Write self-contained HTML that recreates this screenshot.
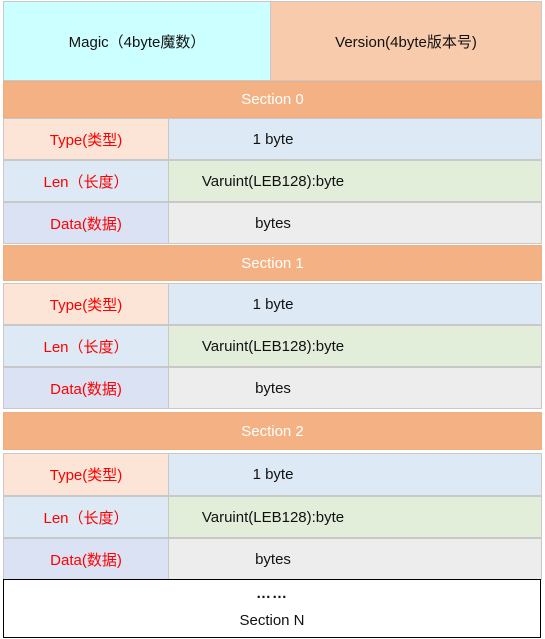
<!DOCTYPE html>
<html><head><meta charset="utf-8"><style>
body{margin:0;width:545px;height:639px;background:#fff;position:relative;overflow:hidden;font-family:"Liberation Sans","Noto Sans CJK SC",sans-serif;font-size:15px;color:#111}
.b{position:absolute;box-sizing:border-box;display:flex;align-items:center;justify-content:center;border:1px solid #c8c8c8}
.t{position:absolute;left:172px;width:200px;text-align:center;height:100%;display:flex;align-items:center;justify-content:center;top:0}
.r{color:#f00}
.s{background:#f4b183;color:#fff;border-color:#f0ad80}
</style></head><body>
<div class="b" style="left:3px;top:1px;width:268px;height:80px;background:#ccffff">Magic（4byte魔数）</div>
<div class="b" style="left:270px;top:1px;width:272px;height:80px;background:#f8cbad">Version(4byte版本号)</div>

<div class="b s" style="left:3px;top:81px;width:539px;height:37px">Section 0</div>
<div class="b r" style="left:3px;top:118px;width:166px;height:42px;background:#fce4d6">Type(类型)</div>
<div class="b" style="left:168px;top:118px;width:374px;height:42px;background:#dde9f5;display:block"><span class="t" style="left:4px">1 byte</span></div>
<div class="b r" style="left:3px;top:160px;width:166px;height:42px;background:#dde9f5">Len（长度）</div>
<div class="b" style="left:168px;top:160px;width:374px;height:42px;background:#e2eeda;display:block"><span class="t" style="left:4px">Varuint(LEB128):byte</span></div>
<div class="b r" style="left:3px;top:202px;width:166px;height:42px;background:#dae2f3">Data(数据)</div>
<div class="b" style="left:168px;top:202px;width:374px;height:42px;background:#ededed;display:block"><span class="t" style="left:4px">bytes</span></div>

<div class="b s" style="left:3px;top:245px;width:539px;height:36px">Section 1</div>
<div class="b r" style="left:3px;top:283px;width:166px;height:42px;background:#fce4d6">Type(类型)</div>
<div class="b" style="left:168px;top:283px;width:374px;height:42px;background:#dde9f5;display:block"><span class="t" style="left:4px">1 byte</span></div>
<div class="b r" style="left:3px;top:325px;width:166px;height:42px;background:#dde9f5">Len（长度）</div>
<div class="b" style="left:168px;top:325px;width:374px;height:42px;background:#e2eeda;display:block"><span class="t" style="left:4px">Varuint(LEB128):byte</span></div>
<div class="b r" style="left:3px;top:367px;width:166px;height:42px;background:#dae2f3">Data(数据)</div>
<div class="b" style="left:168px;top:367px;width:374px;height:42px;background:#ededed;display:block"><span class="t" style="left:4px">bytes</span></div>

<div class="b s" style="left:3px;top:412px;width:539px;height:38px">Section 2</div>
<div class="b r" style="left:3px;top:453px;width:166px;height:43px;background:#fce4d6">Type(类型)</div>
<div class="b" style="left:168px;top:453px;width:374px;height:43px;background:#dde9f5;display:block"><span class="t" style="left:4px">1 byte</span></div>
<div class="b r" style="left:3px;top:496px;width:166px;height:42px;background:#dde9f5">Len（长度）</div>
<div class="b" style="left:168px;top:496px;width:374px;height:42px;background:#e2eeda;display:block"><span class="t" style="left:4px">Varuint(LEB128):byte</span></div>
<div class="b r" style="left:3px;top:538px;width:166px;height:42px;background:#dae2f3">Data(数据)</div>
<div class="b" style="left:168px;top:538px;width:374px;height:42px;background:#ededed;display:block"><span class="t" style="left:4px">bytes</span></div>

<div class="b" style="left:3px;top:579px;width:538px;height:59px;border:1px solid #000;background:#fff;flex-direction:column;line-height:1">
<div style="font-weight:bold;letter-spacing:1px;margin-top:-4px">……</div>
<div style="margin-top:12px">Section N</div>
</div>
</body></html>
